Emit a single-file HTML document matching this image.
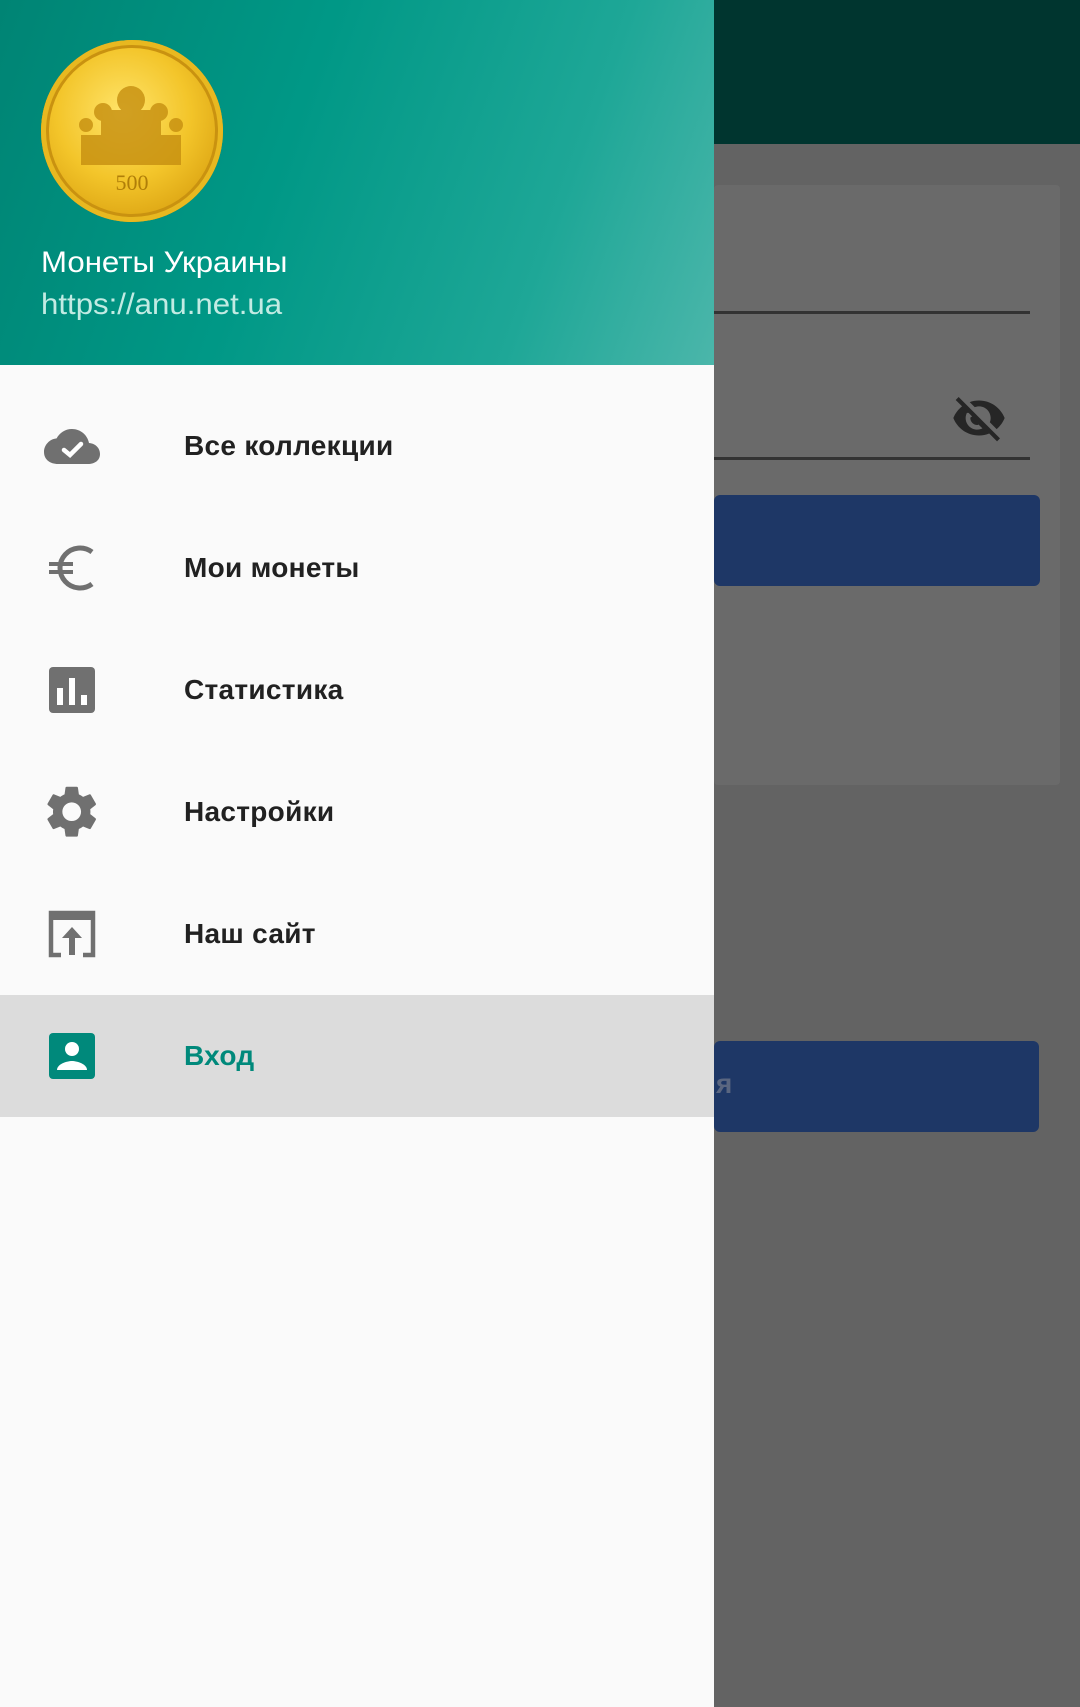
<!DOCTYPE html>
<html><head><meta charset="utf-8"><style>
*{margin:0;padding:0;box-sizing:border-box}
body{width:1080px;height:1707px;position:relative;overflow:hidden;background:#636363;font-family:"Liberation Sans","DejaVu Sans",sans-serif}
.abs{position:absolute}
.item{position:absolute;left:0;width:714px;height:122px}
.item .t{position:absolute;left:184px;top:0;line-height:122px;font-size:28px;font-weight:bold;color:#212121;letter-spacing:0.3px}
.item svg{position:absolute;left:42px;top:37px;width:60px;height:48px;overflow:visible}
</style></head><body>
<div class="abs" style="left:0;top:0;width:1080px;height:144px;background:#00352f"></div>
<div class="abs" style="left:714px;top:185px;width:346px;height:600px;background:#6a6a6a;border-radius:4px"></div>
<div class="abs" style="left:714px;top:311px;width:316px;height:3px;background:#333"></div>
<div class="abs" style="left:714px;top:457px;width:316px;height:3px;background:#333"></div>
<svg class="abs" style="left:948px;top:390px" width="62" height="56" viewBox="0 0 24 24"><path fill="#262626" d="M12 7c2.76 0 5 2.24 5 5 0 .65-.13 1.26-.36 1.83l2.92 2.92c1.51-1.26 2.7-2.89 3.43-4.75-1.73-4.39-6-7.5-11-7.5-1.4 0-2.74.25-3.98.7l2.16 2.16C10.74 7.13 11.35 7 12 7zM2 4.27l2.28 2.28.46.46C3.08 8.3 1.78 10.02 1 12c1.73 4.39 6 7.5 11 7.5 1.550 0 3.030-.3 4.380-.84l.42.42L19.73 22 21 20.730 3.27 3 2 4.27zM7.53 9.8l1.55 1.55c-.5.210-.8.43-.8.65 0 1.66 1.34 3 3 3 .22 0 .44-.3.65-.08l1.550 1.550c-.67.33-1.410.53-2.200.53-2.760 0-5-2.240-5-5 0-.79.2-1.530.53-2.200z"/></svg>
<div class="abs" style="left:714px;top:495px;width:326px;height:91px;background:#1e3766;border-radius:6px"></div>
<div class="abs" style="left:714px;top:1041px;width:325px;height:91px;background:#1e3766;border-radius:6px"></div>
<div class="abs" style="left:716px;top:1068px;font-size:28px;font-weight:bold;color:#5a6680">я</div>

<div class="abs" style="left:0;top:0;width:714px;height:1707px;background:#fafafa"></div>
<div class="abs" style="left:0;top:0;width:714px;height:365px;background:linear-gradient(110deg,#008474 0%,#009886 40%,#1ea797 75%,#4bb6aa 100%)"></div>
<div class="abs" style="left:41px;top:40px;width:182px;height:182px;border-radius:50%;background:radial-gradient(circle at 45% 40%,#ffe46a 0%,#f3c52a 45%,#d9a010 80%,#b98208 100%);box-shadow:inset 0 0 0 5px #e8b820,inset 0 0 0 8px #c99210"></div>
<svg class="abs" style="left:41px;top:40px" width="182" height="182" viewBox="0 0 182 182"><g fill="#c68f10" opacity="0.8"><rect x="40" y="95" width="100" height="30"/><rect x="60" y="70" width="60" height="30"/><circle cx="90" cy="60" r="14"/><circle cx="62" cy="72" r="9"/><circle cx="118" cy="72" r="9"/><circle cx="45" cy="85" r="7"/><circle cx="135" cy="85" r="7"/></g><text x="91" y="150" font-size="22" text-anchor="middle" fill="#b07e08" font-family="Liberation Serif">500</text></svg>
<div class="abs" style="left:41px;top:246px;font-size:30px;color:#fff;transform:scaleX(1.04);transform-origin:left">Монеты Украины</div>
<div class="abs" style="left:41px;top:288px;font-size:30px;color:#c2ebe3;transform:scaleX(1.04);transform-origin:left">https://anu.net.ua</div>

<div class="item" style="top:385px"><svg viewBox="0 0 60 48"><path fill="#707070" d="M47 21c-1.5-8-8.5-14-17-14-6.7 0-12.5 3.8-15.4 9.4C7.6 17.1 2 23 2 30c0 7.7 6.3 12 14 12h30c6.6 0 12-3.5 12-10 0-6.3-4.9-10.5-11-11z"/><path fill="none" stroke="#fff" stroke-width="4.5" stroke-linecap="round" d="M22 28l6 5 11-11"/></svg><div class="t">Все коллекции</div></div>
<div class="item" style="top:507px"><svg viewBox="0 0 60 48"><path fill="none" stroke="#707070" stroke-width="5" d="M50 8a20 20 0 1 0 0 32"/><path stroke="#707070" stroke-width="4" d="M7 20h24M7 28h24"/></svg><div class="t">Мои монеты</div></div>
<div class="item" style="top:629px"><svg viewBox="0 0 60 48"><rect x="7" y="1" width="46" height="46" rx="4" fill="#707070"/><rect x="15" y="22" width="6" height="17" fill="#fff"/><rect x="27" y="12" width="6" height="27" fill="#fff"/><rect x="39" y="29" width="6" height="10" fill="#fff"/></svg><div class="t">Статистика</div></div>
<div class="item" style="top:751px"><svg viewBox="0 0 60 48"><g transform="translate(-1.5 -7.5) scale(2.6)"><path fill="#707070" d="M19.14 12.94c.04-.3.06-.61.06-.94 0-.32-.02-.64-.07-.94l2.03-1.580c.18-.14.23-.41.12-.61l-1.920-3.320c-.12-.22-.37-.29-.59-.22l-2.390.96c-.5-.38-1.030-.7-1.620-.94l-.36-2.540c-.04-.24-.24-.41-.48-.41h-3.840c-.24 0-.43.17-.47.41l-.36 2.540c-.59.24-1.130.57-1.620.94l-2.390-.96c-.22-.08-.47 0-.59.22L2.740 8.870c-.12.21-.08.47.12.61l2.030 1.580c-.05.3-.09.63-.09.94s.02.64.07.94l-2.030 1.580c-.18.14-.23.41-.12.61l1.920 3.320c.12.22.37.29.59.22l2.390-.96c.5.38 1.030.7 1.620.94l.36 2.540c.05.24.24.41.48.41h3.840c.24 0 .44-.17.47-.41l.36-2.540c.59-.24 1.130-.56 1.620-.94l2.390.96c.22.08.47 0 .59-.22l1.920-3.320c.12-.22.07-.47-.12-.61l-2.010-1.580zM12 15.6c-1.980 0-3.600-1.620-3.600-3.600s1.620-3.600 3.600-3.600 3.600 1.620 3.600 3.600-1.620 3.600-3.600 3.600z"/></g></svg><div class="t">Настройки</div></div>
<div class="item" style="top:873px"><svg viewBox="0 0 60 48"><path fill="none" stroke="#707070" stroke-width="4.5" d="M19 45H9V3h42v42H41"/><rect x="7" y="1" width="46" height="9" fill="#707070"/><path fill="#707070" d="M30 17l-10 11h7v17h6V28h7z"/></svg><div class="t">Наш сайт</div></div>
<div class="item" style="top:995px;background:#dcdcdc"><svg viewBox="0 0 60 48"><rect x="7" y="1" width="46" height="46" rx="4" fill="#00897b"/><circle cx="30" cy="17" r="7" fill="#fff"/><path fill="#fff" d="M15 38c0-6 10-9 15-9s15 3 15 9z"/></svg><div class="t" style="color:#00897b">Вход</div></div>
</body></html>
